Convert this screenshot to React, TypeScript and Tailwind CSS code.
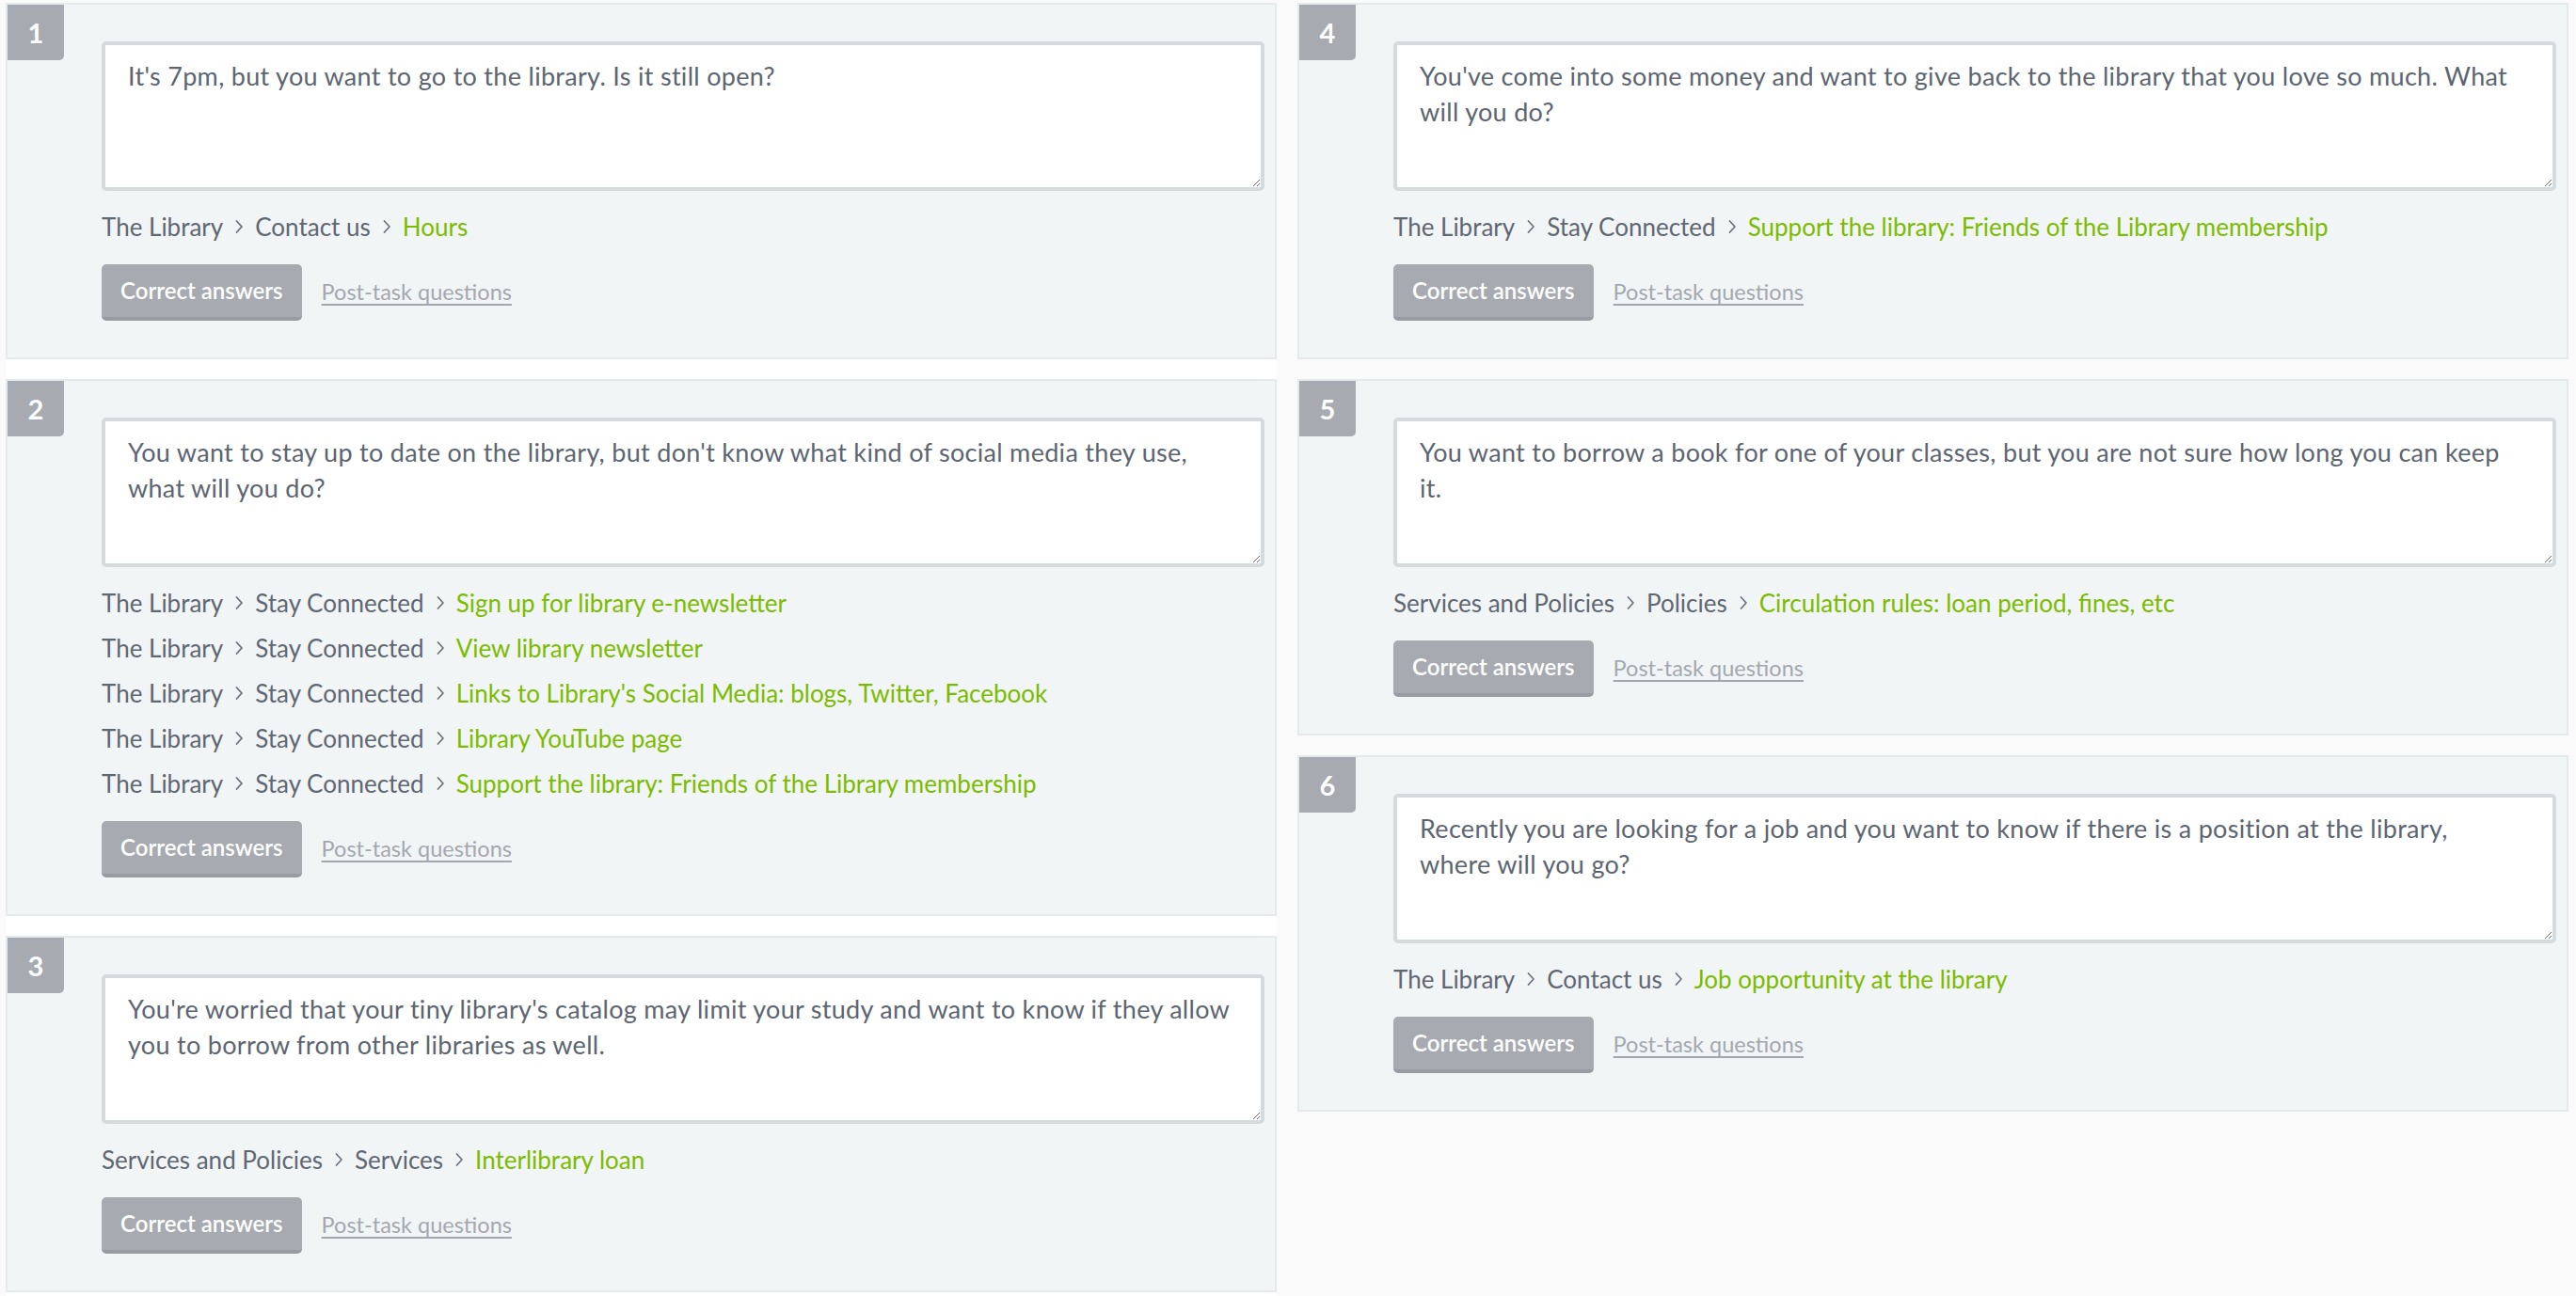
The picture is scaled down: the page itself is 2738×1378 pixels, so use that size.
import React from "react";

type Task = { n: number; text: string; paths: string[][] };

const left: Task[] = [
  {
    n: 1,
    text: "It's 7pm, but you want to go to the library. Is it still open?",
    paths: [["The Library", "Contact us", "Hours"]],
  },
  {
    n: 2,
    text: "You want to stay up to date on the library, but don't know what kind of social media they use,\nwhat will you do?",
    paths: [
      ["The Library", "Stay Connected", "Sign up for library e-newsletter"],
      ["The Library", "Stay Connected", "View library newsletter"],
      ["The Library", "Stay Connected", "Links to Library's Social Media: blogs, Twitter, Facebook"],
      ["The Library", "Stay Connected", "Library YouTube page"],
      ["The Library", "Stay Connected", "Support the library: Friends of the Library membership"],
    ],
  },
  {
    n: 3,
    text: "You're worried that your tiny library's catalog may limit your study and want to know if they allow\nyou to borrow from other libraries as well.",
    paths: [["Services and Policies", "Services", "Interlibrary loan"]],
  },
];

const right: Task[] = [
  {
    n: 4,
    text: "You've come into some money and want to give back to the library that you love so much. What\nwill you do?",
    paths: [["The Library", "Stay Connected", "Support the library: Friends of the Library membership"]],
  },
  {
    n: 5,
    text: "You want to borrow a book for one of your classes, but you are not sure how long you can keep\nit.",
    paths: [["Services and Policies", "Policies", "Circulation rules: loan period, fines, etc"]],
  },
  {
    n: 6,
    text: "Recently you are looking for a job and you want to know if there is a position at the library,\nwhere will you go?",
    paths: [["The Library", "Contact us", "Job opportunity at the library"]],
  },
];

function Chevron() {
  return (
    <svg width="10" height="16" viewBox="0 0 10 16" className="mx-[12px] shrink-0">
      <path d="M2.5 2 L8 8 L2.5 14" fill="none" stroke="#6a717b" strokeWidth="1.7" strokeLinecap="round" strokeLinejoin="round" />
    </svg>
  );
}

function Card({ task }: { task: Task }) {
  return (
    <div className="flex border-2 border-[#e3e9ec] bg-[#f2f5f6]">
      <div className="flex h-[59px] w-[60px] shrink-0 items-center justify-center rounded-br-[5px] bg-[#a7abb1] text-[29px] font-bold text-white">
        {task.n}
      </div>
      <div className="min-w-0 flex-1 pb-[39px] pl-[40px] pr-[11px] pt-[39px]">
        <textarea
          readOnly
          wrap="off"
          value={task.text}
          className="block h-[159px] w-full resize-y overflow-hidden rounded-[5px] border-4 border-[#d5dadd] bg-white px-[24px] py-[14px] text-[27px] leading-[38px] tracking-[0.3px] text-[#5d6570] outline-none"
        />
        <div className="mt-[14px]">
          {task.paths.map((p, i) => (
            <div key={i} className="flex h-[48px] items-center whitespace-nowrap text-[26px]">
              <span className="text-[#5f6772]">{p[0]}</span>
              <Chevron />
              <span className="text-[#5f6772]">{p[1]}</span>
              <Chevron />
              <span className="text-[#7bbb00]">{p[2]}</span>
            </div>
          ))}
        </div>
        <div className="mt-[16px] flex items-center">
          <button className="h-[60px] rounded-[5px] border-b-4 border-[#989ba1] bg-[#a7abb1] px-[20px] text-[24px] font-semibold text-white">
            Correct answers
          </button>
          <span className="ml-[21px] text-[23.5px] text-[#a4a8ae] underline decoration-2 underline-offset-[4px]">
            Post-task questions
          </span>
        </div>
      </div>
    </div>
  );
}

export default function App() {
  return (
    <div className="flex h-[1378px] w-full gap-[22px] overflow-hidden bg-[#fafafa] pl-[6px] pt-[3px] font-['Lato','Noto_Sans',sans-serif]">
      <div className="flex w-[1351px] shrink-0 flex-col gap-[21px] bg-white">
        {left.map((t) => (
          <Card key={t.n} task={t} />
        ))}
      </div>
      <div className="flex w-[1351px] shrink-0 flex-col gap-[21px]">
        {right.map((t) => (
          <Card key={t.n} task={t} />
        ))}
      </div>
    </div>
  );
}
